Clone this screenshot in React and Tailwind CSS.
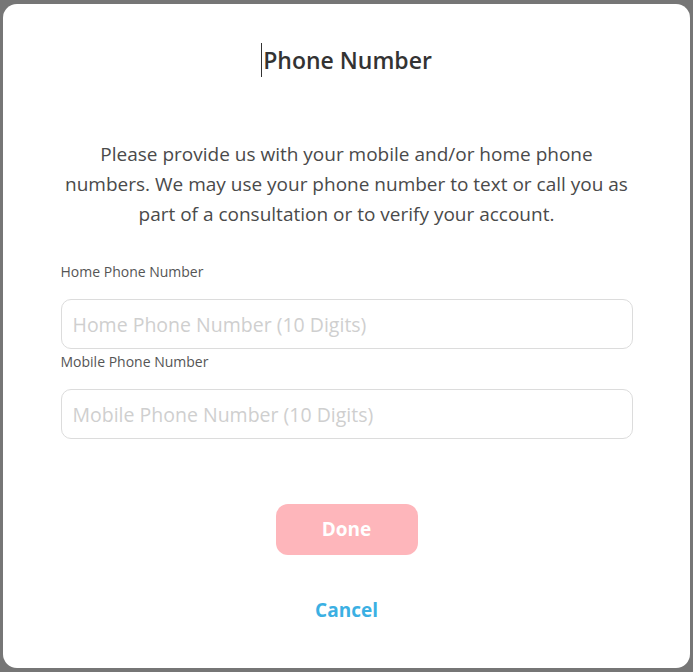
export default function App() {
  return (
    <div className="w-[693px] h-[672px] bg-[#767676] pt-[4px] pl-[3px] overflow-hidden">
      <div className="w-[687px] h-[664px] bg-white rounded-[14px] flex flex-col items-center font-['Open_Sans',sans-serif]">
        <div className="mt-[40px] h-[32px] flex items-center text-[23px] font-semibold text-[#333] leading-[32px]">
          <span className="inline-block w-px h-[34px] bg-[#333] mr-px"></span>
          Phone Number
        </div>
        <p className="mt-[63px] text-center text-[19px] leading-[30px] text-[#4a4a4a]">
          Please provide us with your mobile and/or home phone<br />
          numbers. We may use your phone number to text or call you as<br />
          part of a consultation or to verify your account.
        </p>
        <div className="w-[572px] flex flex-col">
          <label className="mt-[34px] text-[14px] leading-[18px] text-[#555]">Home Phone Number</label>
          <input
            className="mt-[18px] h-[50px] w-full rounded-[10px] border border-[#dcdcdc] px-[11px] text-[19.5px] outline-none placeholder:text-[#cfcfcf]"
            placeholder="Home Phone Number (10 Digits)"
          />
          <label className="mt-[4px] text-[14px] leading-[18px] text-[#555]">Mobile Phone Number</label>
          <input
            className="mt-[18px] h-[50px] w-full rounded-[10px] border border-[#dcdcdc] px-[11px] text-[19.5px] outline-none placeholder:text-[#cfcfcf]"
            placeholder="Mobile Phone Number (10 Digits)"
          />
        </div>
        <button className="mt-[65px] w-[142px] h-[51px] rounded-[12px] bg-[#feb6bb] text-white text-[19px] font-bold">
          Done
        </button>
        <button className="mt-[43px] h-[24px] text-[19px] leading-[24px] font-bold text-[#3bb0e3]">
          Cancel
        </button>
      </div>
    </div>
  );
}
